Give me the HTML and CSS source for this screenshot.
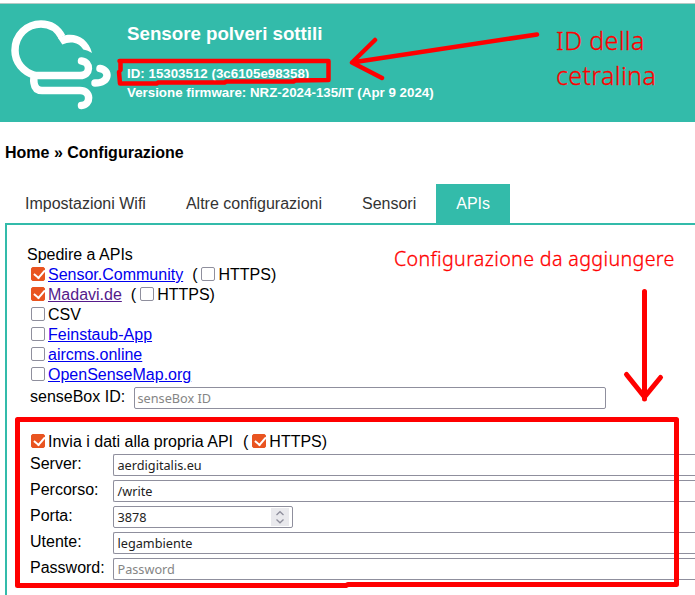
FILE: index.html
```html
<!DOCTYPE html>
<html lang="it">
<head>
<meta charset="utf-8">
<title>Configurazione</title>
<link rel="stylesheet" href="styles.css">
</head>
<body>
<header class="header">
  <svg class="logo" viewBox="0 0 116 118" aria-hidden="true">
    <path d="M35 71.500 C23 68 15 58 15 46.500 C15 31 27 20 41 20 C50 20 57.500 24.500 62 33"/>
    <path class="round" d="M81.500 57 C91 58 91 71.500 80 71.500 H35 C34 73 33.500 76 34 79 Q35 86.500 42 86.500 H80 C91.500 86.500 91 101 81.500 101.500 M100 64.500 C110 66 110 79 95 79"/>
    <path class="tip" d="M58 34 L65.300 31.300 C78 29 88.500 36 92 49 Q88 46 83.300 45.500 C79 38.500 71 36.500 62.300 40.500 Z"/>
  </svg>
  <div class="device">
    <h1>Sensore polveri sottili</h1>
    <p>ID: 15303512 (3c6105e98358)</p>
    <p>Versione firmware: NRZ-2024-135/IT (Apr 9 2024)</p>
  </div>
</header>
<main>
  <h2 class="crumb">Home » Configurazione</h2>
  <nav class="tabs"><span>Impostazioni Wifi</span><span>Altre configurazioni</span><span>Sensori</span><span class="active">APIs</span></nav>
  <section class="panel">
    <div class="row title">Spedire a APIs</div>
    <div class="row"><i class="box on"></i><a href="#">Sensor.Community</a><span class="paren">(</span><i class="box"></i>HTTPS)</div>
    <div class="row"><i class="box on"></i><a href="#" class="visited">Madavi.de</a><span class="paren">(</span><i class="box"></i>HTTPS)</div>
    <div class="row"><i class="box"></i>CSV</div>
    <div class="row"><i class="box"></i><a href="#">Feinstaub-App</a></div>
    <div class="row"><i class="box"></i><a href="#">aircms.online</a></div>
    <div class="row"><i class="box"></i><a href="#">OpenSenseMap.org</a></div>
    <div class="field sense"><label>senseBox ID:</label><div class="input empty">senseBox ID</div></div>
    <div class="row own"><i class="box on"></i>Invia i dati alla propria API<span class="paren">(</span><i class="box on"></i>HTTPS)</div>
    <div class="fields">
      <div class="field"><label>Server:</label><div class="input wide">aerdigitalis.eu</div></div>
      <div class="field"><label>Percorso:</label><div class="input wide">/write</div></div>
      <div class="field"><label>Porta:</label><div class="input port">3878<svg class="spin" viewBox="0 0 18 18"><path d="M5.500 7 L9 3.700 L12.500 7 M5.500 11.500 L9 14.800 L12.500 11.500"/></svg></div></div>
      <div class="field"><label>Utente:</label><div class="input wide">legambiente</div></div>
      <div class="field"><label>Password:</label><div class="input wide empty">Password</div></div>
    </div>
  </section>
</main>
<svg class="notes" viewBox="0 0 695 595">
  <path d="M119.500 61 H328.500 V80 L295 80.500 L294 81.500 H226 L225 82.500 H158 L157 83.500 H120 L119 72 L120.500 70 V61"/>
  <path d="M537 34.500 L352 62.500 L375 40 M352 62.500 L382 78"/>
  <path class="thick" d="M17.500 419.500 H676.500 V584.500 H348 L346 585.500 H17.500 Z"/>
  <path class="thick" d="M644.500 291.500 V399 M626.500 374.500 L644.500 397 L660.500 377.500"/>
</svg>
<div class="note id-note">ID della<br>cetralina</div>
<div class="note config-note">Configurazione da aggiungere</div>
</body>
</html>
```
FILE: styles.css
```css
* { box-sizing: border-box; }
body {
  margin: 0;
  width: 695px;
  height: 595px;
  overflow: hidden;
  position: relative;
  background: #fff;
  color: #000;
  font: 16px/20px "Liberation Sans", Arial, sans-serif;
}
.header {
  display: flex;
  height: 119px;
  margin-top: 3px;
  border-top: 1px solid #b5c9c5;
  background: #33bbaa;
  color: #fff;
}
.logo { width: 116px; height: 118px; flex: none; fill: none; stroke: #fff; stroke-width: 7.5; }
.logo .round { stroke-linecap: round; stroke-linejoin: round; }
.logo .tip { fill: #fff; stroke: none; }
.device { padding: 19px 0 0 11px; font-weight: bold; white-space: nowrap; }
.device h1 { margin: 0 0 19px; font-size: 18.720px; line-height: 22px; }
.device p { margin: 0; font-size: 13.330px; line-height: 19px; }
.crumb { margin: 21px 0 0 5px; font-size: 16px; line-height: 20px; }
.tabs { display: flex; margin: 21px 0 0 5px; }
.tabs span { height: 39px; padding: 0 20px; line-height: 39px; color: #333; white-space: nowrap; }
.tabs .active { background: #33bbaa; color: #fff; }
.panel {
  height: 372px;
  margin-left: 5px;
  padding: 20px 0 0 24px;
  border: solid #33bbaa;
  border-width: 2px 0 0 2px;
}
.row { display: flex; align-items: center; height: 20px; white-space: nowrap; }
.title { margin-left: -4px; }
.box {
  position: relative;
  top: -1px;
  width: 14px;
  height: 14px;
  flex: none;
  margin-right: 3px;
  border: 1px solid #8f8f9d;
  border-radius: 2px;
  background: #fff;
}
.box.on { border-color: #e95420; background: #e95420; }
.box.on::after {
  content: "";
  position: absolute;
  left: 3.500px;
  top: 0;
  width: 5px;
  height: 9px;
  border: solid #fff;
  border-width: 0 2px 2px 0;
  transform: translateY(-0.6px) rotate(40deg);
}
.paren { margin: 0 3px 0 9px; }
.paren + .box { margin-right: 4px; }
.own .paren { margin: 0 4px 0 10px; }
.own .paren + .box { margin-right: 3px; }
.visited + .paren { margin-right: 4px; }
.visited + .paren + .box { margin-right: 3px; }
a { color: #0000ee; text-decoration: underline; }
a.visited { color: #551a8b; }
.field { display: flex; height: 26px; }
.field label { width: 83px; line-height: 20px; flex: none; margin-left: -1px; }
.input {
  position: relative;
  height: 22px;
  padding-left: 3.500px;
  border: 1px solid #8f8f9d;
  border-radius: 2px;
  background: #fff;
  color: #222;
  font: 12.700px/21px "Noto Sans", sans-serif;
  white-space: nowrap;
}
.input.wide { flex: 1; border-right: 0; border-radius: 2px 0 0 2px; }
.input.empty { color: #858585; }
.sense { height: 47px; padding-top: 2px; }
.sense label { width: 104px; }
.sense .input { width: 472px; padding-left: 2.500px; }
.fields { padding-top: 2px; }
.port { width: 180px; }
.spin { position: absolute; right: 3px; top: 1px; width: 18px; height: 18px; background: #e9e9ed; fill: none; stroke: #8f8f9d; stroke-width: 1.300; }
.notes { position: absolute; left: 0; top: 0; width: 695px; height: 595px; fill: none; stroke: #f00; stroke-width: 4.500; stroke-linecap: round; stroke-linejoin: round; }
.notes .thick { stroke-width: 5; }
.note { position: absolute; color: #f00; font-family: "Noto Sans", sans-serif; font-weight: 300; letter-spacing: 0.36px; -webkit-text-stroke: 0.3px #f00; white-space: nowrap; }
.id-note { left: 556px; top: 23px; font-size: 25px; line-height: 35px; }
.config-note { left: 394px; top: 245px; font-size: 19.650px; line-height: 28px; }
```
